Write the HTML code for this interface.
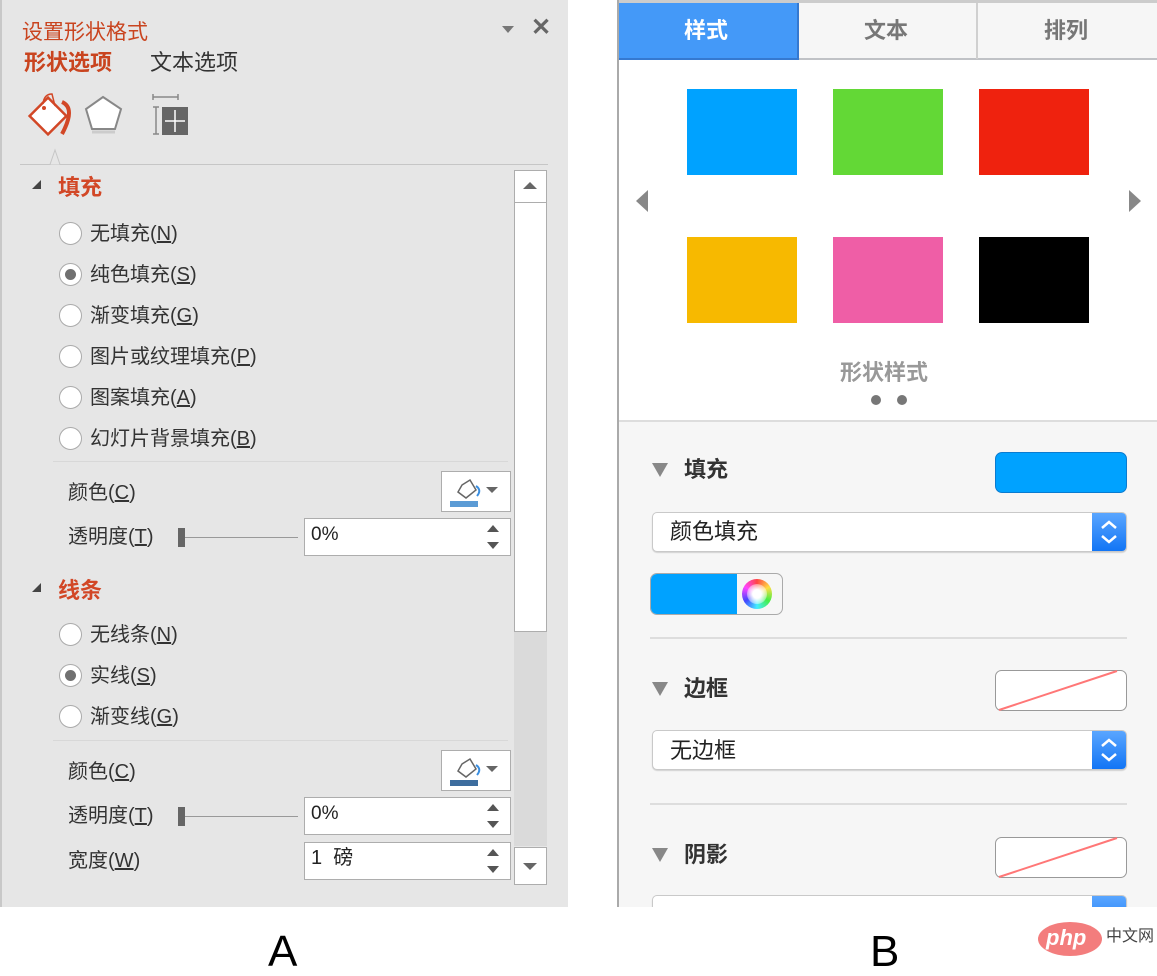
<!DOCTYPE html><html><head><meta charset="utf-8"><style>
*{margin:0;padding:0;box-sizing:border-box}
body{width:1157px;height:969px;background:#fff;position:relative;overflow:hidden;font-family:"Liberation Sans","Noto Sans CJK SC",sans-serif}
.a{position:absolute}
.t{position:absolute;white-space:nowrap;line-height:1}
.rad{position:absolute;width:23px;height:23px;border-radius:50%;background:#fff;border:1px solid #aaa}
.rad.on::after{content:"";position:absolute;left:5px;top:5px;width:11px;height:11px;border-radius:50%;background:#707070}
.lbl{font-size:20px;color:#333}
.inp{position:absolute;background:#fff;border:1px solid #adadad}
.sel{position:absolute;background:#fff;border:1px solid #c9c9c9;border-radius:5px;box-shadow:0 1px 1px rgba(0,0,0,.15);overflow:hidden}
.stp{position:absolute;right:0;top:0;bottom:0;width:34px;background:linear-gradient(#5aa6ff,#1275f5)}
</style></head><body>
<!-- Panel A -->
<div class="a" style="left:0;top:0;width:568px;height:907px;background:#e6e6e6;border-left:2px solid #c8c8c8"></div>
<div class="t" style="left:22px;top:22px;font-size:21px;color:#c9441f">设置形状格式</div>
<div class="a" style="left:502px;top:26px;width:0;height:0;border-left:6px solid transparent;border-right:6px solid transparent;border-top:7px solid #777"></div>
<div class="t" style="left:531px;top:16px;font-size:24px;color:#666;font-weight:bold">✕</div>
<div class="t" style="left:24px;top:52px;font-size:22px;color:#c9441f;font-weight:bold">形状选项</div>
<div class="t" style="left:150px;top:52px;font-size:22px;color:#333">文本选项</div>
<svg class="a" style="left:20px;top:90px" width="190" height="50">
<g transform="translate(28,26) rotate(45)"><rect x="-13" y="-13" width="26" height="26" fill="#fff" stroke="#d24726" stroke-width="2.5"/></g>
<path d="M23 14 Q24 4 32 4 L35 16" fill="none" stroke="#d24726" stroke-width="1.5"/><circle cx="24" cy="18" r="2" fill="#d24726"/>
<path d="M42 12 Q56 18 42 44" fill="none" stroke="#d24726" stroke-width="4"/>
<path d="M83 7 L101 19 L95 39 L72 39 L66 19 Z" fill="#fff" stroke="#888" stroke-width="2"/>
<path d="M72 42 L95 42" stroke="#ccc" stroke-width="3"/>
<path d="M133 7 L158 7 M133 4 V10 M158 4 V10 M136 17 V44 M133 17 H139 M133 44 H139" stroke="#888" stroke-width="1.5"/>
<rect x="142" y="17" width="26" height="28" fill="#666"/>
<path d="M155 20 V42 M145 31 H165" stroke="#fff" stroke-width="1.5"/>
</svg>
<div class="a" style="left:20px;top:164px;width:528px;height:1px;background:#c6c6c6"></div>
<svg class="a" style="left:38px;top:148px" width="34" height="18"><path d="M0 16.5 L12 16.5 L17 2 L22 16.5 L34 16.5" fill="#e6e6e6" stroke="#c6c6c6"/></svg>
<!-- scrollbar -->
<div class="a" style="left:514px;top:170px;width:33px;height:462px;background:#fff;border:1px solid #adadad"></div>
<div class="a" style="left:514px;top:170px;width:33px;height:33px;border:1px solid #adadad;background:#fff"></div>
<div class="a" style="left:523px;top:182px;border-left:7px solid transparent;border-right:7px solid transparent;border-bottom:7px solid #666"></div>
<div class="a" style="left:514px;top:632px;width:33px;height:214px;background:#dadada"></div>
<div class="a" style="left:514px;top:847px;width:33px;height:38px;border:1px solid #adadad;background:#fff"></div>
<div class="a" style="left:523px;top:863px;border-left:7px solid transparent;border-right:7px solid transparent;border-top:7px solid #666"></div>
<!-- fill -->
<div class="a" style="left:32px;top:180px;border-left:9px solid transparent;border-bottom:9px solid #444"></div>
<div class="t" style="left:58px;top:177px;font-size:22px;color:#d24726;font-weight:bold">填充</div>
<div class="rad" style="left:59px;top:222px"></div><div class="t lbl" style="left:90px;top:224px">无填充(<u>N</u>)</div>
<div class="rad on" style="left:59px;top:263px"></div><div class="t lbl" style="left:90px;top:265px">纯色填充(<u>S</u>)</div>
<div class="rad" style="left:59px;top:304px"></div><div class="t lbl" style="left:90px;top:306px">渐变填充(<u>G</u>)</div>
<div class="rad" style="left:59px;top:345px"></div><div class="t lbl" style="left:90px;top:347px">图片或纹理填充(<u>P</u>)</div>
<div class="rad" style="left:59px;top:386px"></div><div class="t lbl" style="left:90px;top:388px">图案填充(<u>A</u>)</div>
<div class="rad" style="left:59px;top:427px"></div><div class="t lbl" style="left:90px;top:429px">幻灯片背景填充(<u>B</u>)</div>
<div class="a" style="left:53px;top:461px;width:455px;height:1px;background:#d8d8d8"></div>
<div class="t lbl" style="left:68px;top:483px">颜色(<u>C</u>)</div>
<div class="inp" style="left:441px;top:471px;width:70px;height:41px">
<svg width="68" height="39"><path d="M20 13 L28 8 L34 18 L24 26 L16 20 Z" fill="#fff" stroke="#666" stroke-width="1.5"/><path d="M34 14 Q40 18 35 24" stroke="#3a8ee0" stroke-width="2" fill="none"/><rect x="8" y="29" width="28" height="6" fill="#5b9bd5"/><path d="M44 15 L56 15 L50 21 Z" fill="#666"/></svg></div>
<div class="t lbl" style="left:68px;top:527px">透明度(<u>T</u>)</div>
<div class="a" style="left:178px;top:528px;width:7px;height:19px;background:#666"></div>
<div class="a" style="left:185px;top:537px;width:113px;height:1px;background:#999"></div>
<div class="inp" style="left:304px;top:518px;width:207px;height:38px"></div>
<div class="t" style="left:311px;top:525px;font-size:19px;color:#222">0%</div>
<div class="a" style="left:487px;top:525px;border-left:6px solid transparent;border-right:6px solid transparent;border-bottom:7px solid #555"></div>
<div class="a" style="left:487px;top:542px;border-left:6px solid transparent;border-right:6px solid transparent;border-top:7px solid #555"></div>
<!-- line -->
<div class="a" style="left:32px;top:583px;border-left:9px solid transparent;border-bottom:9px solid #444"></div>
<div class="t" style="left:58px;top:580px;font-size:22px;color:#d24726;font-weight:bold">线条</div>
<div class="rad" style="left:59px;top:623px"></div><div class="t lbl" style="left:90px;top:625px">无线条(<u>N</u>)</div>
<div class="rad on" style="left:59px;top:664px"></div><div class="t lbl" style="left:90px;top:666px">实线(<u>S</u>)</div>
<div class="rad" style="left:59px;top:705px"></div><div class="t lbl" style="left:90px;top:707px">渐变线(<u>G</u>)</div>
<div class="a" style="left:53px;top:740px;width:455px;height:1px;background:#d8d8d8"></div>
<div class="t lbl" style="left:68px;top:762px">颜色(<u>C</u>)</div>
<div class="inp" style="left:441px;top:750px;width:70px;height:41px">
<svg width="68" height="39"><path d="M20 13 L28 8 L34 18 L24 26 L16 20 Z" fill="#fff" stroke="#666" stroke-width="1.5"/><path d="M34 14 Q40 18 35 24" stroke="#3a8ee0" stroke-width="2" fill="none"/><rect x="8" y="29" width="28" height="6" fill="#3d6d9e"/><path d="M44 15 L56 15 L50 21 Z" fill="#666"/></svg></div>
<div class="t lbl" style="left:68px;top:806px">透明度(<u>T</u>)</div>
<div class="a" style="left:178px;top:807px;width:7px;height:19px;background:#666"></div>
<div class="a" style="left:185px;top:816px;width:113px;height:1px;background:#999"></div>
<div class="inp" style="left:304px;top:797px;width:207px;height:38px"></div>
<div class="t" style="left:311px;top:804px;font-size:19px;color:#222">0%</div>
<div class="a" style="left:487px;top:804px;border-left:6px solid transparent;border-right:6px solid transparent;border-bottom:7px solid #555"></div>
<div class="a" style="left:487px;top:821px;border-left:6px solid transparent;border-right:6px solid transparent;border-top:7px solid #555"></div>
<div class="t lbl" style="left:68px;top:851px">宽度(<u>W</u>)</div>
<div class="inp" style="left:304px;top:842px;width:207px;height:38px"></div>
<div class="t" style="left:311px;top:848px;font-size:20px;color:#222">1&nbsp; 磅</div>
<div class="a" style="left:487px;top:849px;border-left:6px solid transparent;border-right:6px solid transparent;border-bottom:7px solid #555"></div>
<div class="a" style="left:487px;top:866px;border-left:6px solid transparent;border-right:6px solid transparent;border-top:7px solid #555"></div>

<!-- Panel B -->
<div class="a" style="left:617px;top:0;width:540px;height:907px;background:#f6f6f6;border-left:2px solid #aaa"></div>
<div class="a" style="left:619px;top:0;width:538px;height:3px;background:#ccc"></div>
<div class="a" style="left:619px;top:60px;width:538px;height:361px;background:#fff"></div>
<div class="a" style="left:619px;top:3px;width:180px;height:57px;background:#4499f8;border-right:2px solid #3579d0;border-bottom:2px solid #3579d0"></div>
<div class="a" style="left:799px;top:3px;width:358px;height:57px;background:#f6f6f6;border-bottom:2px solid #c0c2c6"></div>
<div class="a" style="left:976px;top:3px;width:2px;height:56px;background:#d0d0d0"></div>
<div class="t" style="left:684px;top:20px;font-size:22px;font-weight:bold;color:#fff">样式</div>
<div class="t" style="left:864px;top:20px;font-size:22px;font-weight:bold;color:#777">文本</div>
<div class="t" style="left:1044px;top:20px;font-size:22px;font-weight:bold;color:#777">排列</div>
<div class="a" style="left:687px;top:89px;width:110px;height:86px;background:#00a2ff"></div>
<div class="a" style="left:833px;top:89px;width:110px;height:86px;background:#63d836"></div>
<div class="a" style="left:979px;top:89px;width:110px;height:86px;background:#ef220e"></div>
<div class="a" style="left:687px;top:237px;width:110px;height:86px;background:#f7b900"></div>
<div class="a" style="left:833px;top:237px;width:110px;height:86px;background:#ef5ea6"></div>
<div class="a" style="left:979px;top:237px;width:110px;height:86px;background:#000"></div>
<div class="a" style="left:636px;top:190px;border-top:11px solid transparent;border-bottom:11px solid transparent;border-right:12px solid #888"></div>
<div class="a" style="left:1129px;top:190px;border-top:11px solid transparent;border-bottom:11px solid transparent;border-left:12px solid #888"></div>
<div class="t" style="left:840px;top:362px;font-size:22px;font-weight:bold;color:#999">形状样式</div>
<div class="a" style="left:871px;top:395px;width:10px;height:10px;border-radius:50%;background:#777"></div>
<div class="a" style="left:897px;top:395px;width:10px;height:10px;border-radius:50%;background:#777"></div>
<div class="a" style="left:619px;top:420px;width:538px;height:2px;background:#ddd"></div>
<!-- fill B -->
<div class="a" style="left:652px;top:463px;border-left:8px solid transparent;border-right:8px solid transparent;border-top:14px solid #888"></div>
<div class="t" style="left:684px;top:459px;font-size:22px;font-weight:bold;color:#333">填充</div>
<div class="a" style="left:995px;top:452px;width:132px;height:41px;border-radius:7px;background:#00a2ff;border:1px solid #0a7bd0"></div>
<div class="sel" style="left:652px;top:512px;width:475px;height:40px"><div class="stp"></div></div>
<div class="t" style="left:670px;top:521px;font-size:22px;color:#222">颜色填充</div>
<svg class="a" style="left:1099px;top:517px" width="20" height="30"><path d="M3 11 L10 5 L17 11 M3 19 L10 25 L17 19" stroke="#fff" stroke-width="2.5" fill="none"/></svg>
<div class="a" style="left:650px;top:573px;width:133px;height:42px;border-radius:7px;background:#f6f6f6;border:1px solid #aaa;overflow:hidden"><div style="width:86px;height:100%;background:#00a2ff"></div></div>
<div class="a" style="left:742px;top:579px;width:30px;height:30px;border-radius:50%;background:conic-gradient(#f44,#fd4,#4e4,#4ef,#44f,#f4f,#f44)"></div>
<div class="a" style="left:747px;top:584px;width:20px;height:20px;border-radius:50%;background:radial-gradient(#fff 30%,rgba(255,255,255,0))"></div>
<div class="a" style="left:650px;top:637px;width:477px;height:2px;background:#ddd"></div>
<!-- border -->
<div class="a" style="left:652px;top:682px;border-left:8px solid transparent;border-right:8px solid transparent;border-top:14px solid #888"></div>
<div class="t" style="left:684px;top:678px;font-size:22px;font-weight:bold;color:#333">边框</div>
<svg class="a" style="left:995px;top:670px" width="133" height="42"><rect x=".5" y=".5" width="131" height="40" rx="6" fill="#fff" stroke="#999"/><path d="M4 40 L122 1" stroke="#f77" stroke-width="2"/></svg>
<div class="sel" style="left:652px;top:730px;width:475px;height:40px"><div class="stp"></div></div>
<div class="t" style="left:670px;top:740px;font-size:22px;color:#222">无边框</div>
<svg class="a" style="left:1099px;top:735px" width="20" height="30"><path d="M3 11 L10 5 L17 11 M3 19 L10 25 L17 19" stroke="#fff" stroke-width="2.5" fill="none"/></svg>
<div class="a" style="left:650px;top:803px;width:477px;height:2px;background:#ddd"></div>
<!-- shadow -->
<div class="a" style="left:652px;top:848px;border-left:8px solid transparent;border-right:8px solid transparent;border-top:14px solid #888"></div>
<div class="t" style="left:684px;top:844px;font-size:22px;font-weight:bold;color:#333">阴影</div>
<svg class="a" style="left:995px;top:837px" width="133" height="42"><rect x=".5" y=".5" width="131" height="40" rx="6" fill="#fff" stroke="#999"/><path d="M4 40 L122 1" stroke="#f77" stroke-width="2"/></svg>
<div class="sel" style="left:652px;top:895px;width:475px;height:40px"><div class="stp"></div></div>
<div class="a" style="left:0;top:907px;width:1157px;height:62px;background:#fff"></div>
<div class="t" style="left:268px;top:930px;font-size:44px;color:#000">A</div>
<div class="t" style="left:870px;top:930px;font-size:44px;color:#000">B</div>
<div class="a" style="left:1038px;top:922px;width:64px;height:34px;border-radius:50%;background:#f37d7d"></div>
<div class="t" style="left:1046px;top:927px;font-size:22px;font-style:italic;color:#fff;font-weight:bold">php</div>
<div class="t" style="left:1106px;top:929px;font-size:16px;color:#444">中文网</div>
</body></html>
